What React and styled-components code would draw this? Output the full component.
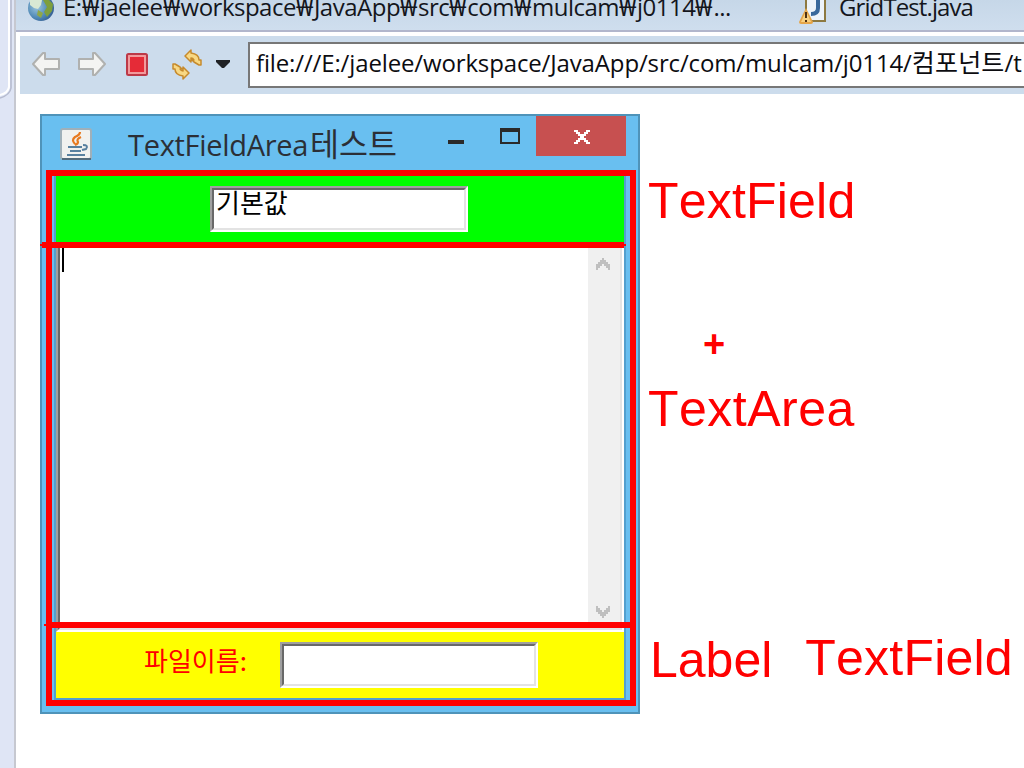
import React from "react";
import styled, { createGlobalStyle } from "styled-components";

const Global = createGlobalStyle`
  * { box-sizing: border-box; }
  body { margin: 0; background: #fff; overflow: hidden; }
`;

const uiFont = `"Open Sans", "Noto Sans CJK KR", sans-serif`;

const Workbench = styled.div`
  display: flex;
  width: 1024px;
  height: 768px;
  overflow: hidden;
  font-family: ${uiFont};
`;
const Rail = styled.aside`
  width: 16px;
  flex: none;
  background: #dfe5f5;
  border-right: 2px solid #c6c8d0;
`;
const Main = styled.main`
  flex: 1;
  min-width: 0;
  background: #fff;
`;
const TabStrip = styled.header`
  display: flex;
  align-items: flex-start;
  height: 32px;
  overflow: hidden;
  background: linear-gradient(#c6d7e8, #cfdeee);
  border-bottom: 2px solid #b1b6cc;
`;
const TabIcon = styled.svg`
  flex: none;
  display: block;
  margin-left: ${(p) => p.$gap}px;
`;
const TabText = styled.span`
  flex: none;
  width: ${(p) => p.$width}px;
  margin: -10px 0 0 ${(p) => p.$gap}px;
  font-size: 24px;
  line-height: 34px;
  letter-spacing: ${(p) => p.$spacing}px;
  white-space: nowrap;
  color: #14161c;
`;
const Won = styled.span`
  display: inline-block;
  width: 18px;
  letter-spacing: 0;
  font-family: "Open Sans", "Noto Sans", sans-serif;
  font-size: 24px;
  line-height: 24px;
  transform: scaleX(1.08);
  transform-origin: left;
`;
const Toolbar = styled.div`
  display: flex;
  align-items: center;
  height: 58px;
  margin: 4px 0 0 4px;
  background: #ccdcec;
`;
const ToolIcon = styled.svg`
  flex: none;
  display: block;
  margin-left: ${(p) => p.$gap}px;
`;
const Address = styled.div`
  flex: none;
  width: 800px;
  height: 46px;
  margin: 0 0 0 18px;
  padding: 0 0 0 6px;
  border: 2px solid #777;
  background: #fff;
  font-size: 24px;
  line-height: 36px;
  letter-spacing: -0.14px;
  white-space: nowrap;
  color: #0c0c10;
`;
const Folder = styled.span`
  font-size: 25px;
  letter-spacing: 0.2px;
`;
const Canvas = styled.section`
  display: flex;
  align-items: flex-start;
  padding: 20px 0 0 24px;
`;
const Frame = styled.div`
  position: relative;
  flex: none;
  width: 600px;
  height: 600px;
  padding: 0 12px;
  border: 2px solid #4f93b9;
  background: #69bff0;
`;
const TitleBar = styled.div`
  display: flex;
  align-items: flex-start;
  height: 60px;
`;
const JavaIcon = styled.svg`
  flex: none;
  display: block;
  margin: 12px 0 0 6px;
`;
const Title = styled.div`
  flex: none;
  width: 314px;
  margin: 9px 0 0 36px;
  font-size: 29px;
  line-height: 40px;
  letter-spacing: -0.3px;
  white-space: nowrap;
  color: #2b2f36;
`;
const TitleHangul = styled.span`
  margin-left: 2px;
  font-family: "Noto Sans CJK KR", sans-serif;
  font-size: 31.5px;
  font-weight: 400;
  line-height: 30px;
  letter-spacing: 0;
`;
const Minimise = styled.i`
  flex: none;
  width: 16px;
  height: 4px;
  margin: 24px 0 0 6px;
  background: #2a2a2a;
`;
const Maximise = styled.i`
  flex: none;
  width: 20px;
  height: 16px;
  margin: 12px 0 0 36px;
  border: 2px solid #2a2a2a;
  border-top-width: 4px;
`;
const Close = styled.div`
  flex: none;
  display: flex;
  justify-content: center;
  width: 90px;
  height: 40px;
  margin: 0 -2px 0 16px;
  padding: 14px 0 0 2px;
  background: #c75050;
`;
const Client = styled.div`
  display: flex;
  flex-direction: column;
  width: 572px;
  height: 524px;
  border: solid #539fce;
  border-width: 0 2px 2px;
`;
const Panel = styled.div`
  display: flex;
  flex: none;
  height: ${(p) => p.$height}px;
  padding: 10px 0 0 ${(p) => p.$inset}px;
  background: ${(p) => p.$color};
`;
const Field = styled.div`
  flex: none;
  width: 258px;
  height: 46px;
  border: 2px solid;
  border-color: #a0a0a0 #fff #fff #a0a0a0;
`;
const FieldInner = styled.div`
  height: 42px;
  padding: 0 0 0 2px;
  border: 2px solid;
  border-color: #696969 #e3e3e3 #e3e3e3 #696969;
  background: #fff;
  font: 400 26px/24px "Noto Sans CJK KR", sans-serif;
  color: #000;
`;
const Area = styled.div`
  display: flex;
  flex: 1;
  border: 2px solid;
  border-color: #a0a0a0 #fff #fff #a0a0a0;
`;
const AreaInner = styled.div`
  display: flex;
  flex: 1;
  justify-content: space-between;
  border: 2px solid;
  border-color: #696969 #e3e3e3 #e3e3e3 #696969;
  background: #fff;
`;
const Caret = styled.i`
  width: 2px;
  height: 24px;
  margin: 0 0 0 2px;
  background: #000;
`;
const ScrollBar = styled.div`
  display: flex;
  flex-direction: column;
  justify-content: space-between;
  align-items: center;
  width: 32px;
  padding: 10px 2px 10px 0;
  background: #f0f0f0;
`;
const FileLabel = styled.div`
  width: 136px;
  flex: none;
  font: 400 26px/36px "Noto Sans CJK KR", sans-serif;
  color: #f00;
`;
const Outline = styled.div`
  position: absolute;
  left: 4px;
  top: 54px;
  width: 590px;
  height: 536px;
  border: 6px solid #f00;
`;
const Rule = styled.div`
  position: absolute;
  left: ${(p) => p.$left}px;
  top: ${(p) => p.$top}px;
  width: ${(p) => p.$width}px;
  height: 6px;
  background: #f00;
  &::before {
    content: "";
    position: absolute;
    left: -2px;
    right: ${(p) => p.$tail}px;
    top: 2px;
    height: 2px;
    background: #f00;
  }
`;
const Notes = styled.div`
  display: flex;
  flex-direction: column;
  align-items: flex-start;
  padding-left: 8px;
  font-family: "Liberation Sans", Arial, sans-serif;
  font-size: 50px;
  line-height: 56px;
  font-kerning: none;
  color: #f00;
`;
const Note = styled.div`
  margin-top: ${(p) => p.$top}px;
  padding-left: ${(p) => p.$left || 0}px;
  letter-spacing: ${(p) => p.$spacing || 0}px;
  white-space: nowrap;
`;
const Plus = styled.div`
  margin: 87px 0 0 55px;
  font-size: 38px;
  font-weight: 700;
`;
const NoteRow = styled.div`
  display: flex;
  align-items: flex-start;
  margin-top: 193px;
`;

const PATH_PARTS = ["jaelee", "workspace", "JavaApp", "src", "com", "mulcam", "j0114", "..."];

function Arrow({ flip, gap }) {
  return (
    <ToolIcon $gap={gap} width="30" height="26" viewBox="0 0 30 26">
      <path
        transform={flip ? "translate(30 0) scale(-1 1)" : undefined}
        d="M2 12 L12 1 H14 V7 H28 V17 H14 V23 H12 Z"
        fill="#f4f4f2"
        stroke="#b0b1af"
        strokeWidth="2"
        strokeLinejoin="round"
      />
    </ToolIcon>
  );
}

function ScrollArrow({ down }) {
  return (
    <svg width="14" height="12" viewBox="0 0 14 12">
      <path
        transform={down ? "translate(0 12) scale(1 -1)" : undefined}
        d="M6 0H8V2H10V4H12V6H14V12H12V10H10V8H8V6H6V8H4V10H2V12H0V6H2V4H4V2H6Z"
        fill="#bfbfbf"
      />
    </svg>
  );
}

export default function App() {
  return (
    <Workbench>
      <Global />
      <Rail>
        <svg width="14" height="100" viewBox="0 0 14 100" fill="none">
          <path d="M9 0V87Q8 93 0 95" stroke="#fff" strokeWidth="2" />
          <path d="M11 0V88Q10 95 0 98" stroke="#b6bbcf" strokeWidth="1.6" />
        </svg>
      </Rail>
      <Main>
        <TabStrip>
          <TabIcon $gap={11} width="28" height="23" viewBox="0 0 28 23">
            <defs>
              <radialGradient id="globe" cx=".35" cy=".45" r=".7">
                <stop offset="0" stopColor="#9fc8df" />
                <stop offset=".6" stopColor="#5089b6" />
                <stop offset="1" stopColor="#31578c" />
              </radialGradient>
            </defs>
            <circle cx="14" cy="8" r="13" fill="url(#globe)" />
            <path d="M3 0H15L14 5 11 9 7 8 3 5Z" fill="#d9e9d4" />
            <path d="M16 0H22L26 4 25 11 20 17 17 12 20 7Z" fill="#7e9f3d" />
            <path d="M11 10L16 13 14 18 10 15Z" fill="#8fa747" />
          </TabIcon>
          <TabText $gap={8} $width={735} $spacing={-0.5}>
            E:
            {PATH_PARTS.map((part) => (
              <React.Fragment key={part}>
                <Won>₩</Won>
                {part}
              </React.Fragment>
            ))}
          </TabText>
          <TabIcon $gap={1} width="30" height="25" viewBox="0 0 30 25">
            <path d="M7 -2H26V21H7Z" fill="#edf3fa" stroke="#8d7941" strokeWidth="2" />
            <path d="M19 0V8Q19 14 12 14" fill="none" stroke="#39689b" strokeWidth="4" />
            <path d="M7 8L14 22Q14 24 12 24H2Q0 24 0 22Z" fill="#e5a548" />
            <path d="M7 11L12 22H2Z" fill="#f8d183" />
            <path d="M7 12V18M7 20V22" stroke="#4c3013" strokeWidth="2" />
          </TabIcon>
          <TabText $gap={10} $width={150} $spacing={-0.9}>GridTest.java</TabText>
        </TabStrip>

        <Toolbar>
          <Arrow gap={11} />
          <Arrow gap={16} flip />
          <ToolIcon $gap={19} width="22" height="24" viewBox="0 0 22 24">
            <rect x="1" y="1" width="20" height="21" rx="1.5" fill="#f29a9c" stroke="#bd3947" strokeWidth="2" />
            <rect x="4" y="4" width="14" height="15" fill="#e52b37" />
          </ToolIcon>
          <ToolIcon $gap={24} width="30" height="32" viewBox="0 0 30 32">
            <g fill="#f8d883" stroke="#c68a2c" strokeWidth="1.5" strokeLinejoin="round">
              <path d="M13 7L19 1V4Q27 5 27 11L29 11V16H27L22 13 20 11H22Q21 9 19 9V13Z" />
              <path d="M17 24L11 30V27Q3 26 3 20L1 20V15H3L8 18 10 20H8Q9 22 11 22V18Z" />
            </g>
          </ToolIcon>
          <ToolIcon $gap={14} width="14" height="10" viewBox="0 0 14 10">
            <path d="M0 0H14V2L8 8H6L0 2Z" fill="#202225" />
          </ToolIcon>
          <Address>
            file:///E:/jaelee/workspace/JavaApp/src/com/mulcam/j0114/<Folder>컴포넌트</Folder>/t
          </Address>
        </Toolbar>

        <Canvas>
          <Frame>
            <TitleBar>
              <JavaIcon width="32" height="32" viewBox="0 0 32 32">
                <rect x="1" y="1" width="30" height="30" rx="2" fill="#f1f1ef" stroke="#9fb0ba" strokeWidth="2" />
                <path d="M2 31H31" stroke="#526b7c" strokeWidth="2" />
                <path d="M20 4Q20 7 15 9Q11 12 15 16M21 9Q16 11 18 14Q18 16 15 17" fill="none" stroke="#e77a20" strokeWidth="2.2" />
                <path d="M8 19H22M10 23H21M7 27H25M23 17Q29 17 26 21L22 22" fill="none" stroke="#58809f" strokeWidth="2" />
              </JavaIcon>
              <Title>
                TextFieldArea<TitleHangul>테스트</TitleHangul>
              </Title>
              <Minimise />
              <Maximise />
              <Close>
                <svg width="16" height="14" viewBox="0 0 16 14">
                  <path d="M0 0H4V2H6V4H10V2H12V0H16V2H14V4H12V6H10V8H12V10H14V12H16V14H12V12H10V10H6V12H4V14H0V12H2V10H4V8H6V6H4V4H2V2H0Z" fill="#fff" />
                </svg>
              </Close>
            </TitleBar>
            <Client>
              <Panel $height={68} $inset={154} $color="#0f0">
                <Field><FieldInner>기본값</FieldInner></Field>
              </Panel>
              <Area>
                <AreaInner>
                  <Caret />
                  <ScrollBar>
                    <ScrollArrow />
                    <ScrollArrow down />
                  </ScrollBar>
                </AreaInner>
              </Area>
              <Panel $height={66} $inset={88} $color="#ff0">
                <FileLabel>파일이름:</FileLabel>
                <Field><FieldInner /></Field>
              </Panel>
            </Client>
            <Outline />
            <Rule $left={0} $top={126} $width={582} $tail={-2} />
            <Rule $left={4} $top={506} $width={590} $tail={0} />
          </Frame>
          <Notes>
            <Note $top={59} $spacing={0.2}>TextField</Note>
            <Plus>+</Plus>
            <Note $top={9} $spacing={0.5}>TextArea</Note>
            <NoteRow>
              <Note $top={2} $left={2}>Label</Note>
              <Note $top={0} $left={33} $spacing={0.2}>TextField</Note>
            </NoteRow>
          </Notes>
        </Canvas>
      </Main>
    </Workbench>
  );
}
